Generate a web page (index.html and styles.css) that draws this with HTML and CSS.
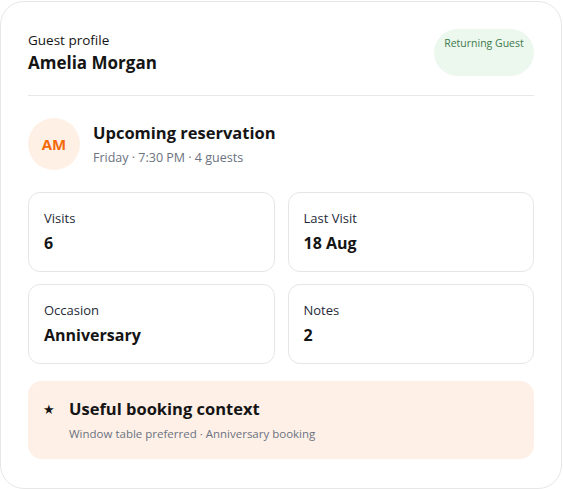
FILE: index.html
```html
<!DOCTYPE html>
<html lang="en">
<head>
<meta charset="utf-8">
<title>Guest profile</title>
<link rel="stylesheet" href="styles.css">
</head>
<body>
<div class="profile">
  <div class="header">
    <div class="who">
      <div class="kicker">Guest profile</div>
      <div class="name">Amelia Morgan</div>
    </div>
    <div class="pill">Returning Guest</div>
  </div>

  <div class="upcoming">
    <div class="avatar">AM</div>
    <div>
      <div class="title">Upcoming reservation</div>
      <div class="sub">Friday · 7:30 PM · 4 guests</div>
    </div>
  </div>

  <div class="stats">
    <div class="stat"><div class="label">Visits</div><div class="value">6</div></div>
    <div class="stat"><div class="label">Last Visit</div><div class="value">18 Aug</div></div>
    <div class="stat"><div class="label">Occasion</div><div class="value">Anniversary</div></div>
    <div class="stat"><div class="label">Notes</div><div class="value">2</div></div>
  </div>

  <div class="context">
    <div class="context-head"><span class="star">★</span><span class="title">Useful booking context</span></div>
    <div class="context-sub">Window table preferred · Anniversary booking</div>
  </div>
</div>
</body>
</html>
```

FILE: styles.css
```css
body {
  margin: 0;
  background: #ffffff;
  font-family: "Open Sans", "Noto Sans", sans-serif;
  color: #151515;
}

.profile {
  box-sizing: border-box;
  width: 562px;
  height: 488px;
  margin-top: 1px;
  padding: 27px 27px;
  border: 1px solid #e7e7e7;
  border-radius: 24px;
  background: #fff;
}

/* Header */
.header {
  display: flex;
  justify-content: space-between;
  padding-bottom: 19px;
  border-bottom: 1px solid #e8e8e8;
}

.kicker {
  font-size: 13.5px;
  line-height: 20px;
  margin-top: 1px;
}

.name {
  font-size: 17px;
  font-weight: 700;
  line-height: 26px;
}

.pill {
  width: 100px;
  box-sizing: border-box;
  padding-top: 7px;
  text-align: center;
  font-size: 10.5px;
  color: #3d7a4c;
  background: #ecf7ee;
  border-radius: 24px;
}

/* Upcoming reservation */
.upcoming {
  display: flex;
  align-items: center;
  gap: 13px;
  margin-top: 22px;
}

.avatar {
  width: 52px;
  height: 52px;
  border-radius: 50%;
  background: #fff0e6;
  color: #f36b0c;
  font-size: 15px;
  font-weight: 700;
  display: flex;
  align-items: center;
  justify-content: center;
}

.title {
  font-size: 16.5px;
  font-weight: 700;
  line-height: 22px;
}

.sub {
  font-size: 12.5px;
  color: #6b7280;
  margin-top: 5px;
}

/* Stat cards */
.stats {
  display: grid;
  grid-template-columns: 1fr 1fr;
  gap: 12px 13px;
  margin-top: 22px;
}

.stat {
  height: 80px;
  box-sizing: border-box;
  padding: 16px 15px;
  border: 1px solid #e6e6e6;
  border-radius: 12px;
}

.label {
  font-size: 13px;
  line-height: 18px;
  color: #1f2937;
}

.value {
  margin-top: 5px;
  font-size: 16px;
  font-weight: 700;
}

/* Booking context */
.context {
  margin-top: 17px;
  height: 78px;
  box-sizing: border-box;
  padding: 17px 15px;
  background: #fef0e7;
  border-radius: 14px;
}

.context-head {
  display: flex;
  align-items: center;
  gap: 13px;
}

.star {
  font-size: 13px;
  width: 13px;
}

.context-sub {
  margin-left: 26px;
  margin-top: 6px;
  font-size: 11.5px;
  color: #6b7280;
}
```
